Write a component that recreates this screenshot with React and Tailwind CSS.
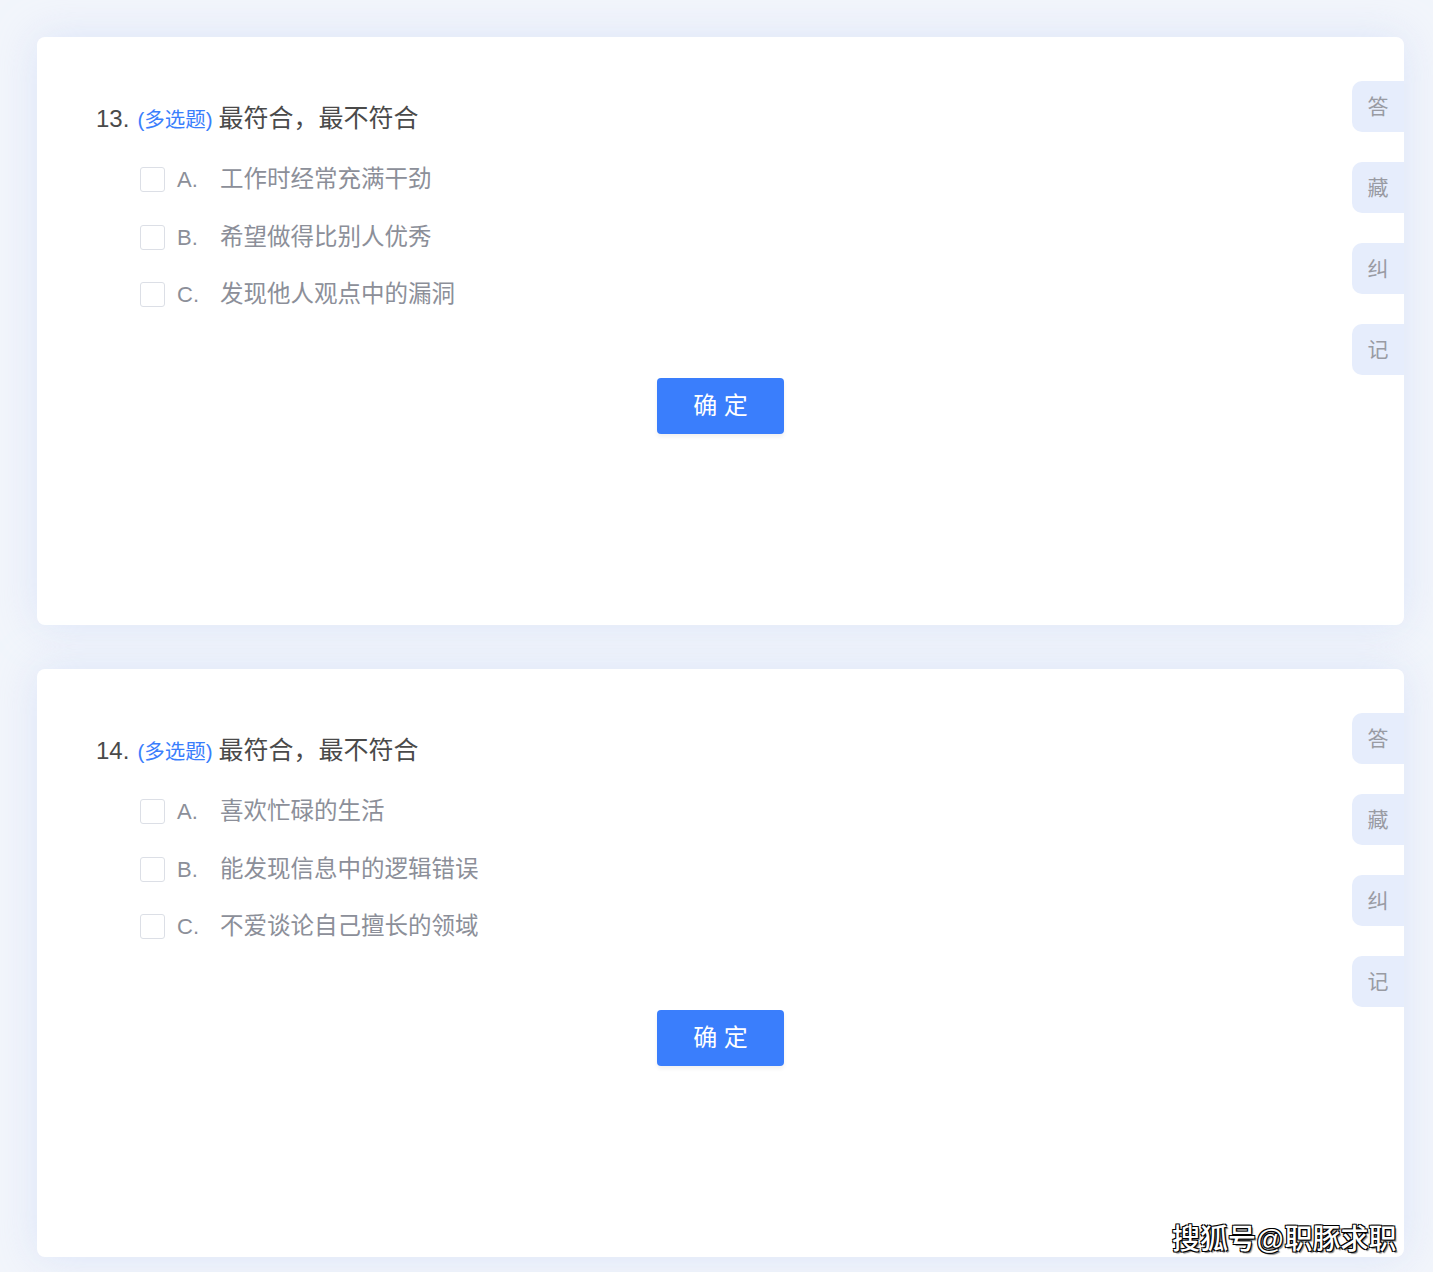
const questions = [
  {
    no: 13,
    options: [
      { key: 'A.', text: '工作时经常充满干劲' },
      { key: 'B.', text: '希望做得比别人优秀' },
      { key: 'C.', text: '发现他人观点中的漏洞' },
    ],
  },
  {
    no: 14,
    options: [
      { key: 'A.', text: '喜欢忙碌的生活' },
      { key: 'B.', text: '能发现信息中的逻辑错误' },
      { key: 'C.', text: '不爱谈论自己擅长的领域' },
    ],
  },
];

const tabs = ['答', '藏', '纠', '记'];

function QuestionCard({ q }) {
  return (
    <div className="relative bg-white rounded-[8px] h-[588px] pt-[65px] pl-[59px] shadow-[0_0_40px_rgba(205,218,246,0.6)]">
      <div className="flex items-baseline h-[32px] leading-[32px]">
        <span className="text-[24px] text-[#4a4a4a]">{q.no}.</span>
        <span className="text-[20.5px] text-[#3a7efc] ml-[8px]">(多选题)</span>
        <span className="text-[25px] text-[#4a4a4a] ml-[6px]">最符合，最不符合</span>
      </div>

      <div className="mt-[17px] pl-[44px] flex flex-col">
        {q.options.map((opt) => (
          <div key={opt.key} className="flex items-center h-[57.5px]">
            <span className="w-[25px] h-[25px] border border-[#dcdfe6] rounded-[3px] bg-white"></span>
            <span className="ml-[12px] w-[43px] text-[22px] text-[#8c8f99]">{opt.key}</span>
            <span className="text-[23.5px] text-[#8c8f99]">{opt.text}</span>
          </div>
        ))}
      </div>

      <div className="mt-[54px] flex justify-center pr-[59px]">
        <button className="w-[127px] h-[56px] rounded-[4px] bg-[#3a7efc] text-white text-[24px] shadow-[0_3px_4px_rgba(0,0,0,0.06)]">
          确 定
        </button>
      </div>

      <div className="absolute right-0 top-[44px] flex flex-col gap-[30px]">
        {tabs.map((t) => (
          <div
            key={t}
            className="w-[52px] h-[51px] rounded-l-[10px] bg-[#e6edfc] flex items-center justify-center text-[21px] text-[#999ba3]"
          >
            {t}
          </div>
        ))}
      </div>
    </div>
  );
}

export default function App() {
  return (
    <div
      className="relative min-h-[1272px] bg-[#f2f5fb] px-[29px] pt-[37px] pb-[16px]"
      style={{ fontFamily: '"Liberation Sans", "Noto Sans CJK SC", sans-serif' }}
    >
      <div className="flex flex-col gap-[44px] w-[1367px] ml-[8px]">
        {questions.map((q) => (
          <QuestionCard key={q.no} q={q} />
        ))}
      </div>

      <div className="absolute left-[1172px] top-[1222px] text-[28px] leading-[36px] text-white font-medium [text-shadow:1px_1px_0_#000,-1px_-1px_0_#000,1px_-1px_0_#000,-1px_1px_0_#000,2px_2px_1px_rgba(0,0,0,0.5)]">
        搜狐号@职豚求职
      </div>
    </div>
  );
}
